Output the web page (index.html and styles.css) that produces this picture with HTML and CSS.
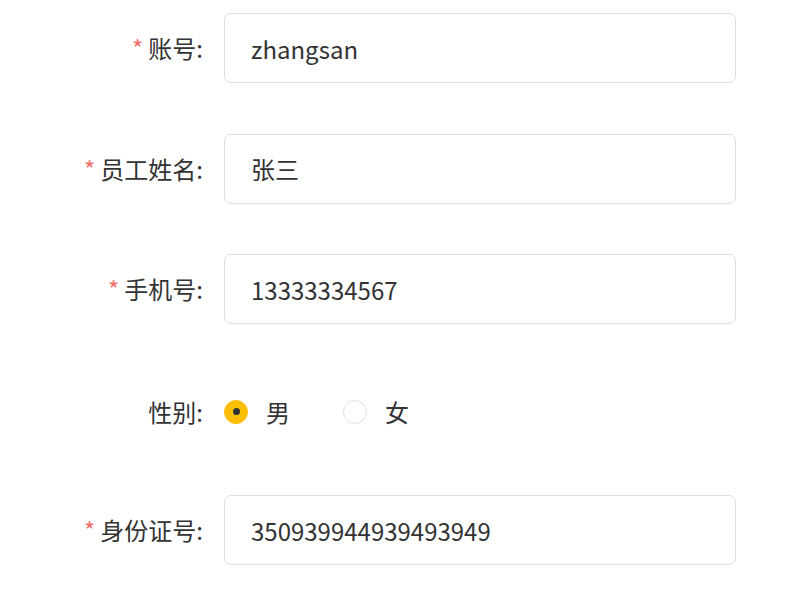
FILE: index.html
```html
<!DOCTYPE html>
<html lang="zh-CN">
<head>
<meta charset="utf-8">
<link rel="stylesheet" href="styles.css">
</head>
<body>
<form class="form">
  <div class="item">
    <label class="label"><span class="req">*</span>账号:</label>
    <div class="control"><input class="input" value="zhangsan"></div>
  </div>
  <div class="item">
    <label class="label"><span class="req">*</span>员工姓名:</label>
    <div class="control"><input class="input" value="张三"></div>
  </div>
  <div class="item">
    <label class="label"><span class="req">*</span>手机号:</label>
    <div class="control"><input class="input" value="13333334567"></div>
  </div>
  <div class="item item-radio">
    <label class="label">性别:</label>
    <div class="control radios">
      <span class="radio checked"><span class="dot"></span><span class="rtext">男</span></span>
      <span class="radio"><span class="dot"></span><span class="rtext">女</span></span>
    </div>
  </div>
  <div class="item">
    <label class="label"><span class="req">*</span>身份证号:</label>
    <div class="control"><input class="input" value="350939944939493949"></div>
  </div>
</form>
</body>
</html>
```
FILE: styles.css
```css
html, body {
  margin: 0;
  padding: 0;
  background: #fff;
}
body {
  font-family: "Noto Sans CJK SC", "Noto Sans", sans-serif;
  color: #303133;
}
.form {
  padding-top: 13px;
  width: 736px;
}
.item {
  display: flex;
  align-items: center;
  height: 70px;
  margin-bottom: 50.5px;
}
.item-radio {
  padding-top: 4px;
  height: 66px;
}
.label {
  width: 203px;
  padding-right: 21px;
  text-align: right;
  font-size: 24px;
  color: #333;
  line-height: 70px;
  flex: none;
}
.req {
  color: #f56c6c;
  margin-right: 5px;
  font-size: 24px;
}
.control {
  flex: 1;
  display: flex;
  align-items: center;
}
.input {
  box-sizing: border-box;
  width: 512px;
  height: 70px;
  border: 1px solid #dcdfe6;
  border-radius: 7px;
  padding: 0 26px;
  font-family: "Noto Sans CJK SC", "Noto Sans", sans-serif;
  font-size: 24px;
  color: #333;
  outline: none;
  background: #fff;
}
.radio {
  display: inline-flex;
  align-items: center;
  font-size: 24px;
  color: #333;
  margin-right: 53px;
}
.dot {
  box-sizing: border-box;
  width: 24px;
  height: 24px;
  border-radius: 50%;
  border: 1px solid #dcdfe6;
  background: #fff;
  position: relative;
  flex: none;
}
.checked .dot {
  background: #fcbf00;
  border-color: #fcbf00;
}
.checked .dot::after {
  content: "";
  position: absolute;
  left: 50%;
  top: 50%;
  width: 7px;
  height: 7px;
  margin: -3.5px 0 0 -3.5px;
  border-radius: 50%;
  background: #303133;
}
.rtext {
  margin-left: 18px;
}
```
